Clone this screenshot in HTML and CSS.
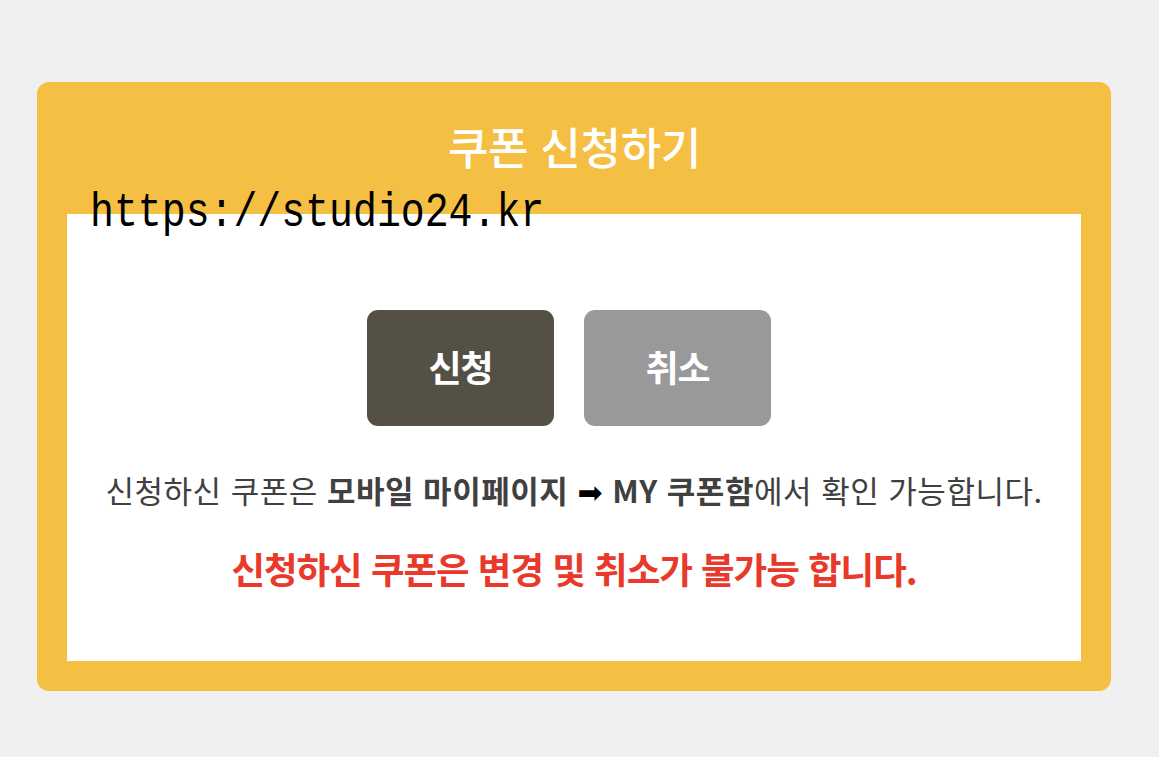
FILE: index.html
```html
<!DOCTYPE html>
<html lang="ko">
<head>
<meta charset="utf-8">
<title>쿠폰 신청하기</title>
<link rel="stylesheet" href="styles.css">
</head>
<body>
<div class="card">
  <h1 class="title">쿠폰 신청하기</h1>
  <div class="panel">
    <span class="url">https://studio24.kr</span>
    <div class="buttons">
      <button class="btn btn-apply">신청</button>
      <button class="btn btn-cancel">취소</button>
    </div>
    <p class="info">신청하신 쿠폰은 <b>모바일 마이페이지</b> <span class="arrow">➡</span> <b>MY 쿠폰함</b>에서 확인 가능합니다.</p>
    <p class="warn">신청하신 쿠폰은 변경 및 취소가 불가능 합니다.</p>
  </div>
</div>
</body>
</html>
```

FILE: styles.css
```css
html, body {
  margin: 0;
  padding: 0;
}
body {
  background: #f0f0f0;
  padding: 82px 0 0 37px;
  font-family: "Noto Sans CJK KR", "Noto Sans", sans-serif;
}
.card {
  width: 1074px;
  height: 609px;
  box-sizing: border-box;
  background: #f4bf42;
  border-radius: 12px;
  padding: 0 30px 30px;
  display: flex;
  flex-direction: column;
}
.title {
  margin: 0;
  height: 132px;
  display: flex;
  align-items: center;
  justify-content: center;
  color: #fff;
  font-size: 44px;
  font-weight: 500;
  letter-spacing: -0.3px;
  padding: 0 0 4px 1px;
  box-sizing: border-box;
}
.panel {
  flex: 1;
  background: #fff;
  position: relative;
  padding-top: 96px;
  display: flex;
  flex-direction: column;
  align-items: center;
}
.url {
  position: absolute;
  left: 23px;
  top: -31px;
  font-family: "Liberation Mono", monospace;
  font-size: 48px;
  line-height: 60px;
  color: #000;
  transform: scaleX(0.83);
  transform-origin: left center;
  white-space: nowrap;
}
.buttons {
  display: flex;
  gap: 30px;
  margin-right: 10px;
}
.btn {
  width: 187px;
  height: 116px;
  border: 0;
  border-radius: 11px;
  color: #fff;
  font-family: inherit;
  font-size: 36px;
  font-weight: 700;
  letter-spacing: -1px;
  padding: 0 0 4px;
}
.btn-apply { background: #545045; }
.btn-cancel { background: #999999; }
.info {
  margin: 43px 0 0;
  font-size: 31px;
  color: #404040;
  letter-spacing: 0.5px;
  line-height: 42px;
}
.info b { font-weight: 700; }
.arrow {
  font-family: "DejaVu Sans", sans-serif;
  color: #000;
  font-size: 30px;
}
.warn {
  margin: 31px 0 0;
  font-size: 36.5px;
  font-weight: 700;
  color: #e8392b;
  letter-spacing: -1px;
  line-height: 48px;
}
```
